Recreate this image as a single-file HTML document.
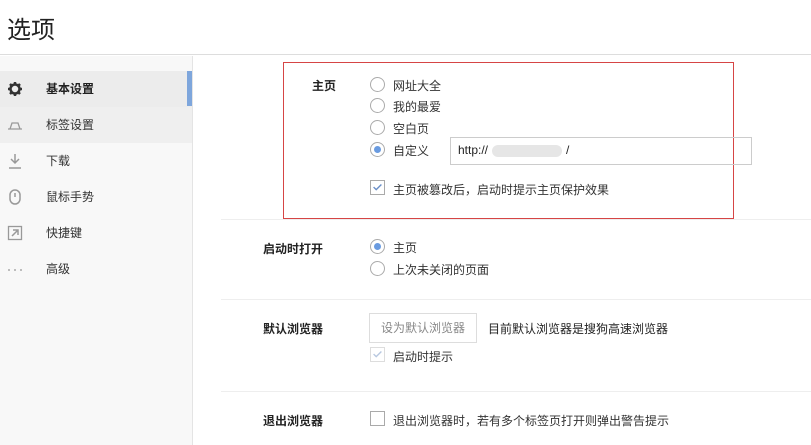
<!DOCTYPE html>
<html><head><meta charset="utf-8"><style>
*{margin:0;padding:0;box-sizing:border-box}
body{width:811px;height:445px;overflow:hidden;background:#fff;font-family:"Liberation Sans","Noto Sans CJK SC",sans-serif;font-size:12px;color:#333;position:relative}
.a{position:absolute}
.hdr{left:0;top:0;width:811px;height:55px;border-bottom:1px solid #ddd;background:#fff}
.hdr span{position:absolute;left:7px;top:10px;font-size:24px;color:#222}
.side{left:0;top:56px;width:193px;height:389px;background:#f8f8f8;border-right:1px solid #e4e4e4}
.item{position:absolute;left:0;width:192px;height:36px;line-height:36px}
.item .t{position:absolute;left:46px;color:#333}
.item .i{position:absolute;left:7px;top:10px;width:16px;height:16px}
.radio{position:absolute;width:15px;height:15px;border:1px solid #aaa;border-radius:50%;background:#fff}
.radio.on::after{content:"";position:absolute;left:3px;top:3px;width:7px;height:7px;border-radius:50%;background:#6a9be0}
.lbl{position:absolute;font-weight:bold;color:#222}
.tx{position:absolute;color:#333}
.cb{position:absolute;width:15px;height:15px;border:1px solid #aaa;background:#fff}
.line{position:absolute;left:221px;right:0;height:1px;background:#eee}
</style></head><body>
<div class="a hdr"><span>选项</span></div>
<div class="a side">
 <div class="item" style="top:15px;background:#ececec"><svg class="i" viewBox="0 0 16 16"><circle cx="8" cy="8" r="4.5" fill="none" stroke="#333" stroke-width="2.5"/><g stroke="#333" stroke-width="2.5"><path d="M8 1v3M8 12v3M1 8h3M12 8h3M3 3l2 2M11 11l2 2M3 13l2-2M11 5l2-2"/></g></svg><span class="t" style="font-weight:bold;color:#222">基本设置</span><div class="a" style="right:0;top:0;width:5px;height:35px;background:#7ea6dc"></div></div>
 <div class="item" style="top:51px;background:#efefef"><svg class="i" viewBox="0 0 16 16"><path d="M1 12h14M3 12l2-6h6l2 6" fill="none" stroke="#999" stroke-width="1.3"/></svg><span class="t">标签设置</span></div>
 <div class="item" style="top:87px"><svg class="i" viewBox="0 0 16 16"><path d="M8 1v8M4 6l4 4 4-4M2 15h12" fill="none" stroke="#999" stroke-width="1.5"/></svg><span class="t">下载</span></div>
 <div class="item" style="top:123px"><svg class="i" viewBox="0 0 16 16"><rect x="3" y="1" width="10" height="14" rx="5" fill="none" stroke="#999" stroke-width="1.5"/><path d="M8 4v4" stroke="#999" stroke-width="1.5"/></svg><span class="t">鼠标手势</span></div>
 <div class="item" style="top:159px"><svg class="i" viewBox="0 0 16 16"><rect x="1.5" y="1.5" width="13" height="13" fill="none" stroke="#999" stroke-width="1.3"/><path d="M5 11l6-6M6 5h5v5" fill="none" stroke="#999" stroke-width="1.5"/></svg><span class="t">快捷键</span></div>
 <div class="item" style="top:195px"><svg class="i" viewBox="0 0 16 16"><g fill="#aaa"><circle cx="2" cy="9" r="1"/><circle cx="8" cy="9" r="1"/><circle cx="14" cy="9" r="1"/></g></svg><span class="t">高级</span></div>
</div>
<div class="line" style="top:219px"></div>
<div class="a" style="left:283px;top:62px;width:451px;height:157px;border:1px solid #d64545"></div>
<div class="lbl" style="left:312px;top:77px">主页</div>
<div class="radio" style="left:370px;top:77px"></div><div class="tx" style="left:393px;top:77px">网址大全</div>
<div class="radio" style="left:370px;top:98px"></div><div class="tx" style="left:393px;top:98px">我的最爱</div>
<div class="radio" style="left:370px;top:120px"></div><div class="tx" style="left:393px;top:120px">空白页</div>
<div class="radio on" style="left:370px;top:142px"></div><div class="tx" style="left:393px;top:142px">自定义</div>
<div class="a" style="left:450px;top:137px;width:302px;height:28px;border:1px solid #ccc"></div>
<div class="tx" style="left:458px;top:143px;color:#222">http://<span style="display:inline-block;width:70px;height:12px;background:#e6e6e6;border-radius:6px;vertical-align:middle;margin:0 4px"></span>/</div>
<div class="cb" style="left:370px;top:180px"><svg viewBox="0 0 15 15" width="13" height="13"><path d="M3 7l3 3 6-6" fill="none" stroke="#6a8fc8" stroke-width="1.6"/></svg></div>
<div class="tx" style="left:393px;top:181px">主页被篡改后，启动时提示主页保护效果</div>
<div class="lbl" style="left:263px;top:240px">启动时打开</div>
<div class="radio on" style="left:370px;top:239px"></div><div class="tx" style="left:393px;top:239px">主页</div>
<div class="radio" style="left:370px;top:261px"></div><div class="tx" style="left:393px;top:261px">上次未关闭的页面</div>
<div class="line" style="top:299px"></div>
<div class="lbl" style="left:263px;top:320px">默认浏览器</div>
<div class="a" style="left:369px;top:313px;width:108px;height:30px;border:1px solid #ddd;color:#888;line-height:28px;text-align:center">设为默认浏览器</div>
<div class="tx" style="left:488px;top:320px;color:#222">目前默认浏览器是搜狗高速浏览器</div>
<div class="cb" style="left:370px;top:347px;border-color:#ddd"><svg viewBox="0 0 15 15" width="13" height="13"><path d="M3 7l3 3 6-6" fill="none" stroke="#b8c8e0" stroke-width="1.6"/></svg></div>
<div class="tx" style="left:393px;top:348px">启动时提示</div>
<div class="line" style="top:391px"></div>
<div class="lbl" style="left:263px;top:412px">退出浏览器</div>
<div class="cb" style="left:370px;top:411px"></div>
<div class="tx" style="left:393px;top:412px">退出浏览器时，若有多个标签页打开则弹出警告提示</div>
</body></html>
